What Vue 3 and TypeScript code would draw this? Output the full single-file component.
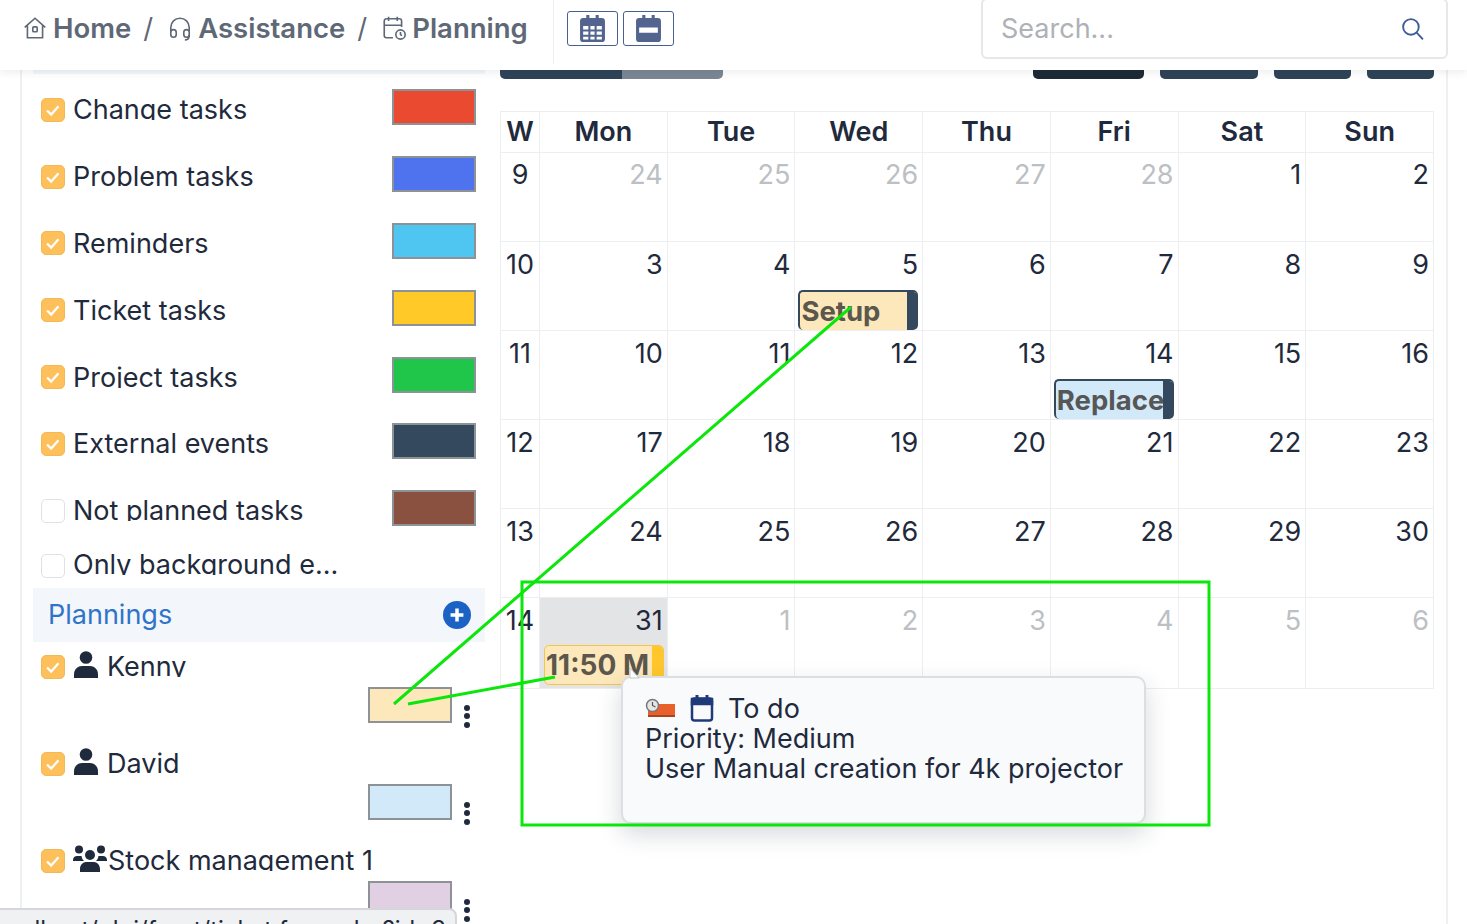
<template>
  <div class="page">
    <header class="topbar">
      <nav class="crumbs">
        <svg class="crumb-icon" viewBox="0 0 24 24"><path d="M2.500 11.500 12 3l9.500 8.500M5 9.500V21h14V9.500" /><rect x="10" y="11" width="4" height="4.500" rx="0.800" /></svg>
        <span class="crumb">Home</span>
        <span class="sep">/</span>
        <svg class="crumb-icon" viewBox="0 0 24 24"><path d="M3.500 15v-3.500a8.500 8.500 0 0 1 17 0V15" /><rect x="3.500" y="13.500" width="5" height="7" rx="2.500" /><rect x="15.500" y="13.500" width="5" height="7" rx="2.500" /><path d="M20.500 18.500v1a4 4 0 0 1-4 3.500" /></svg>
        <span class="crumb">Assistance</span>
        <span class="sep">/</span>
        <svg class="crumb-icon" viewBox="0 0 24 24"><path d="M11 21H5a2 2 0 0 1-2-2V5.500a2 2 0 0 1 2-2h12a2 2 0 0 1 2 2V11M15 1.500v4M7 1.500v4M3 9.500h16" /><circle cx="18" cy="18" r="4.300" /><path d="M18 15.800V18l1.300 1" /></svg>
        <span class="crumb">Planning</span>
      </nav>
      <div class="view-btns">
        <button class="view-btn">
          <svg viewBox="0 0 24 26"><path fill-rule="evenodd" d="M6 0h3v3h6V0h3v3h3a3 3 0 0 1 3 3v17a3 3 0 0 1-3 3H3a3 3 0 0 1-3-3V6a3 3 0 0 1 3-3h3zM3 10.500v3.500h5v-3.500zm7 0v3.500h4v-3.500zm6 0v3.500h5v-3.500zM3 16v3h5v-3zm7 0v3h4v-3zm6 0v3h5v-3zM3 21v2.500h5V21zm7 0v2.500h4V21zm6 0v2.500h5V21z" /></svg>
        </button>
        <button class="view-btn">
          <svg viewBox="0 0 24 26"><path fill-rule="evenodd" d="M6 0h3v3h6V0h3v3h3a3 3 0 0 1 3 3v17a3 3 0 0 1-3 3H3a3 3 0 0 1-3-3V6a3 3 0 0 1 3-3h3zM3 12v5h18v-5z" /></svg>
        </button>
      </div>
      <div class="search">
        <span class="search-ph">Search...</span>
        <svg class="search-icon" viewBox="0 0 24 24"><circle cx="10.500" cy="10.500" r="7.500" /><path d="m16 16 6 6.500" /></svg>
      </div>
    </header>

    <div class="content">
      <aside class="sidebar">
        <div class="panel-top"></div>
        <div v-for="f in filters" :key="f.name" class="filter">
          <span class="check" :class="{ on: f.on }">
            <svg v-if="f.on" viewBox="0 0 24 24"><path d="m5.500 12.500 4.500 4.500 8-9" /></svg>
          </span>
          <span class="label">{{ f.name }}</span>
          <span class="swatch" :style="{ background: f.color }"></span>
        </div>
        <div class="filter short">
          <span class="check"></span>
          <span class="label">Only background e...</span>
        </div>
        <div class="plan-head">
          <span>Plannings</span>
          <span class="plus">
            <svg viewBox="0 0 24 24"><path d="M12 6.500v11M6.500 12h11" /></svg>
          </span>
        </div>
        <div v-for="p in plannings" :key="p.name" class="plan">
          <div class="plan-row">
            <span class="check on">
              <svg viewBox="0 0 24 24"><path d="m5.500 12.500 4.500 4.500 8-9" /></svg>
            </span>
            <svg v-if="!p.group" class="user" viewBox="0 0 24 27">
              <circle cx="12" cy="6.500" r="6.300" />
              <path d="M0 27v-3.500C0 18 4 15 8 15h8c4 0 8 3 8 8.500V27z" />
            </svg>
            <svg v-else class="users" viewBox="0 0 34 27">
              <circle cx="6" cy="4.500" r="4" /><circle cx="28" cy="4.500" r="4" /><circle cx="17" cy="10" r="5" />
              <path d="M0 16v-1c0-2.500 2-4 4-4h4.500c.3 2 1.300 4 2.500 5zM34 16v-1c0-2.500-2-4-4-4h-4.500c-.3 2-1.300 4-2.500 5zM7 27v-3c0-4 3-7 6-7h8c3 0 6 3 6 7v3z" />
            </svg>
            <span class="label" :class="{ tight: p.group }">{{ p.name }}</span>
          </div>
          <div class="plan-color">
            <span class="swatch" :style="{ background: p.color }"></span>
            <span class="dots"><i></i><i></i><i></i></span>
          </div>
        </div>
      </aside>

      <main class="main">
        <div class="toolbar">
          <div class="tool-group">
            <span class="tool prev"></span>
            <span class="tool next"></span>
          </div>
          <div class="tool-group right">
            <span class="tool active"></span>
            <span class="tool w98"></span>
            <span class="tool w77"></span>
            <span class="tool w67"></span>
          </div>
        </div>
        <div class="calendar">
          <div class="head-row">
            <div v-for="h in heads" :key="h" class="head-cell">{{ h }}</div>
          </div>
          <div v-for="(w, i) in weeks" :key="w.no" class="week" :class="'week-' + i">
            <div class="week-no">{{ w.no }}</div>
            <div
              v-for="(d, j) in w.days"
              :key="j"
              class="day"
              :class="{ muted: d.muted, today: d.today }"
            >
              <span class="date">{{ d.n }}</span>
              <div v-if="d.event" class="event" :class="d.event.kind">
                <span class="event-text">{{ d.event.title }}</span>
                <span class="event-bar"></span>
              </div>
            </div>
          </div>
        </div>
      </main>
    </div>

    <div class="tooltip">
      <div class="tip-line">
        <svg class="tip-status" viewBox="0 0 30 20">
          <rect x="3" y="6" width="27" height="13" fill="#e8602c" />
          <rect x="3" y="17" width="27" height="2" fill="#a8441f" />
          <circle cx="7.500" cy="7.500" r="6" fill="#e6e6e6" stroke="#777" stroke-width="1.500" />
          <path d="M7.500 4v3.500l3 1.500" fill="none" stroke="#555" stroke-width="1.200" />
        </svg>
        <svg class="tip-cal" viewBox="0 0 24 28"><path d="M7 1v5M17 1v5" stroke-width="3" /><rect x="2" y="4.500" width="20" height="22" rx="2.500" /><path d="M2 5h20v5H2z" fill="#1f3a7a" /></svg>
        <span>To do</span>
      </div>
      <div class="tip-line">Priority: Medium</div>
      <div class="tip-line">User Manual creation for 4k projector</div>
    </div>

    <svg class="overlay" viewBox="0 0 1467 924">
      <path class="cursor" d="M630 668v10h9z" />
      <rect x="522" y="582" width="687" height="243" />
      <path d="M851 307 394 704M555 677 408 704" />
    </svg>

    <div class="status-url"><span>localhost/glpi/front/ticket.form.php?id=3</span></div>
  </div>
</template>

<script setup lang="ts">
interface CalEvent {
  title: string;
  kind: string;
}

interface Day {
  n: number;
  muted?: boolean;
  today?: boolean;
  event?: CalEvent;
}

const filters = [
  { name: 'Change tasks', color: '#ea4a2f', on: true },
  { name: 'Problem tasks', color: '#4f73ef', on: true },
  { name: 'Reminders', color: '#4fc6f2', on: true },
  { name: 'Ticket tasks', color: '#ffc928', on: true },
  { name: 'Project tasks', color: '#1fc64a', on: true },
  { name: 'External events', color: '#34495e', on: true },
  { name: 'Not planned tasks', color: '#8a5040', on: false }
];

const plannings = [
  { name: 'Kenny', color: '#fde8bb', group: false },
  { name: 'David', color: '#d2e9f9', group: false },
  { name: 'Stock management 1', color: '#e1d0e3', group: true }
];

const heads = ['W', 'Mon', 'Tue', 'Wed', 'Thu', 'Fri', 'Sat', 'Sun'];

const range = (from: number, to: number, muted = false): Day[] => {
  const out: Day[] = [];
  for (let n = from; n <= to; n++) out.push({ n, muted });
  return out;
};

const week10 = range(3, 9);
week10[2].event = { title: 'Setup', kind: 'setup' };

const week11 = range(10, 16);
week11[4].event = { title: 'Replace', kind: 'replace' };

const week14: Day[] = [
  { n: 31, today: true, event: { title: '11:50 M', kind: 'todo' } },
  ...range(1, 6, true)
];

const weeks = [
  { no: 9, days: [...range(24, 28, true), ...range(1, 2)] },
  { no: 10, days: week10 },
  { no: 11, days: week11 },
  { no: 12, days: range(17, 23) },
  { no: 13, days: range(24, 30) },
  { no: 14, days: week14 }
];
</script>

<style scoped>
.page {
  position: relative;
  display: flex;
  flex-direction: column;
  height: 924px;
  overflow: hidden;
  background: #fff;
  color: #1f2a3d;
  font-family: Inter, 'Liberation Sans', sans-serif;
  font-size: 27px;
}

.topbar {
  position: relative;
  z-index: 2;
  display: flex;
  flex: none;
  height: 70px;
  padding-left: 22px;
  background: #fff;
  box-shadow: 0 2px 8px rgba(30, 40, 60, 0.09);
}

.crumbs {
  display: flex;
  align-items: center;
  box-sizing: border-box;
  width: 532px;
  height: 64px;
  padding-bottom: 8px;
  border-right: 1px solid #eceef1;
  color: #5f6876;
  font-weight: 600;
  font-size: 27.500px;
}

.crumb-icon {
  flex: none;
  width: 26px;
  height: 26px;
  margin-right: 5px;
  fill: none;
  stroke: #5f6876;
  stroke-width: 1.500;
}

.sep {
  margin: 0 14px 0 12px;
  font-weight: 400;
}

.view-btns {
  display: flex;
  gap: 5px;
  margin: 11px 0 0 13px;
}

.view-btn {
  display: flex;
  align-items: center;
  justify-content: center;
  width: 51px;
  height: 35px;
  padding: 0;
  border: 1px solid #48608f;
  border-radius: 3px;
  background: #fff;
}

.view-btn svg {
  width: 25px;
  height: 27px;
  fill: #53658f;
}

.search {
  display: flex;
  align-items: center;
  justify-content: space-between;
  box-sizing: border-box;
  width: 467px;
  height: 61px;
  margin: -2px 0 0 307px;
  padding: 0 21px 0 18px;
  border: 2px solid #e6e7ea;
  border-radius: 6px;
  background: #fff;
}

.search-ph {
  color: #aeb1b6;
}

.search-icon {
  width: 25px;
  height: 25px;
  fill: none;
  stroke: #3d5a9a;
  stroke-width: 1.800;
}

.content {
  display: flex;
  flex: 1;
  min-height: 0;
  margin: 0 19px 0 20px;
  padding-left: 11px;
  border-right: 2px solid #eef0f2;
  border-left: 2px solid #eef0f2;
}

.sidebar {
  flex: none;
  width: 452px;
  margin-right: 15px;
}

.panel-top {
  height: 4px;
  background: #f3f6fb;
}

.filter {
  display: flex;
  align-items: center;
  height: 66.800px;
  padding: 0 9px 0 8px;
}

.filter.short {
  height: 46.400px;
}

.filter.short .check {
  margin-top: 2px;
}

.filter.short .label {
  margin-top: 2px;
  margin-bottom: 6px;
}

.check {
  display: inline-flex;
  flex: none;
  box-sizing: border-box;
  width: 24px;
  height: 24px;
  margin-top: 5px;
  border: 1px solid #dfe1e5;
  border-radius: 5px;
  background: #fff;
}

.check.on {
  border-color: #f3b957;
  background: #fdc05a;
}

.check svg {
  fill: none;
  stroke: #fff;
  stroke-width: 2.500;
}

/* descenders are cut in the real sidebar too */
.label {
  flex: 1;
  overflow: hidden;
  height: 25px;
  margin: 5px 0 4px 8px;
  line-height: 30px;
  white-space: nowrap;
}

.swatch {
  display: block;
  flex: none;
  box-sizing: border-box;
  width: 84px;
  height: 36px;
  border: 2px solid #8d9296;
}

.plan-head {
  display: flex;
  align-items: center;
  justify-content: space-between;
  height: 54px;
  padding: 0 14px 0 15px;
  background: #f3f6fb;
  color: #2f74c8;
}

.plus {
  display: flex;
  width: 28px;
  height: 28px;
  border-radius: 50%;
  background: #1b62c4;
}

.plus svg {
  fill: none;
  stroke: #fff;
  stroke-width: 3;
}

.plan {
  height: 96.800px;
}

.plan-row {
  display: flex;
  align-items: center;
  height: 50px;
  padding-left: 8px;
}

.plan-row .check {
  margin-top: 0;
}

.user {
  flex: none;
  width: 24px;
  height: 27px;
  margin: -4px 0 0 9px;
  fill: #1f2a3d;
}

.users {
  flex: none;
  width: 34px;
  height: 27px;
  margin: -4px 0 0 8px;
  fill: #1f2a3d;
}

.plan-row .label {
  margin: 0 0 5px 9px;
}

.plan-row .label.tight {
  margin-left: 1px;
}

.plan-color {
  display: flex;
  justify-content: flex-end;
  gap: 10px;
  margin-top: -5px;
  padding-right: 13px;
}

.dots {
  display: flex;
  flex-direction: column;
  gap: 2.500px;
  width: 6px;
  margin: 18px 2px 0;
}

.dots i {
  width: 6px;
  height: 6px;
  border-radius: 50%;
  background: #1f2a3d;
}

.main {
  flex: none;
  width: 934px;
}

.toolbar {
  display: flex;
  justify-content: space-between;
  height: 9px;
  margin-bottom: 32px;
}

.tool-group {
  display: flex;
}

.tool-group.right {
  gap: 16px;
}

.tool {
  display: block;
  height: 9px;
  background: #2f4358;
  border-radius: 0 0 5px 5px;
}

.tool.prev {
  width: 122px;
  border-radius: 0 0 0 5px;
}

.tool.next {
  width: 101px;
  background: #7b8794;
  border-radius: 0 0 5px 0;
}

.tool.active {
  width: 111px;
  background: #1d2a36;
}

.tool.w98 {
  width: 98px;
}

.tool.w77 {
  width: 77px;
}

.tool.w67 {
  width: 67px;
}

.calendar {
  border-top: 1px solid #eceef0;
  border-left: 1px solid #eceef0;
}

.head-row,
.week {
  display: grid;
  grid-template-columns: 39px repeat(7, 1fr);
}

.head-row {
  height: 40px;
}

.head-cell {
  border-right: 1px solid #eceef0;
  border-bottom: 1px solid #eceef0;
  font-weight: 600;
  line-height: 40px;
  text-align: center;
}

.week {
  height: 89px;
}

.week-0 {
  height: 90px;
}

.week-5 {
  height: 91px;
}

.week-no {
  border-right: 1px solid #eceef0;
  border-bottom: 1px solid #eceef0;
  padding-top: 9px;
  line-height: 28px;
  text-align: center;
}

.day {
  display: flex;
  flex-direction: column;
  min-width: 0;
  padding: 9px 4px 0;
  border-right: 1px solid #eceef0;
  border-bottom: 1px solid #eceef0;
}

.date {
  line-height: 28px;
  text-align: right;
}

.muted .date {
  color: #bcbfc4;
}

.today {
  background: #e3e4e6;
}

.event {
  display: flex;
  overflow: hidden;
  flex: none;
  box-sizing: border-box;
  width: 120px;
  height: 40px;
  margin: 11px 0 0 -1px;
  border: 2px solid #34495e;
  border-right: 0;
  border-bottom: 0;
  border-radius: 5px;
  color: #5c574c;
  font-size: 27.500px;
  line-height: 38px;
}

.event-text {
  flex: 1;
  overflow: hidden;
  min-width: 0;
  padding-left: 1px;
  white-space: nowrap;
  font-weight: 700;
}

.event-bar {
  flex: none;
  width: 11px;
  background: #34495e;
}

.setup {
  background: #fde8bb;
}

.replace {
  background: #d2e9f9;
}

.replace .event-text {
  color: #565656;
}

.event.todo {
  margin: 10px 0 0;
  border: 1px solid #f6c44e;
  background: #fde8bb;
  font-size: 28px;
  line-height: 39px;
}

.todo .event-bar {
  background: #ffc72c;
}

.tooltip {
  position: absolute;
  z-index: 3;
  top: 676px;
  left: 621px;
  box-sizing: border-box;
  width: 525px;
  height: 148px;
  padding: 15px 22px;
  border: 2px solid #dcdee2;
  border-radius: 10px;
  background: #f9fafc;
  box-shadow: 0 10px 24px rgba(30, 40, 60, 0.18);
}

.tip-line {
  display: flex;
  align-items: center;
  height: 30px;
  white-space: nowrap;
}

.tip-status {
  width: 30px;
  height: 20px;
  margin-right: 15px;
}

.tip-cal {
  width: 24px;
  height: 28px;
  margin-right: 14px;
  fill: none;
  stroke: #1f3a7a;
  stroke-width: 2.500;
}

.overlay {
  position: absolute;
  z-index: 4;
  top: 0;
  left: 0;
  width: 1467px;
  height: 924px;
  pointer-events: none;
  fill: none;
  stroke: #0be60b;
  stroke-width: 3;
}

.overlay .cursor {
  fill: #fff;
  stroke: #c4c6ca;
  stroke-width: 1;
}

.status-url {
  position: absolute;
  z-index: 5;
  top: 908px;
  left: -14px;
  display: flex;
  justify-content: flex-end;
  overflow: hidden;
  box-sizing: border-box;
  width: 471px;
  height: 30px;
  padding: 6px 9px 0 0;
  border: 2px solid #d4d6d9;
  border-radius: 8px;
  background: #f0f1f3;
  font-size: 24px;
  line-height: 28px;
  white-space: nowrap;
}
</style>
